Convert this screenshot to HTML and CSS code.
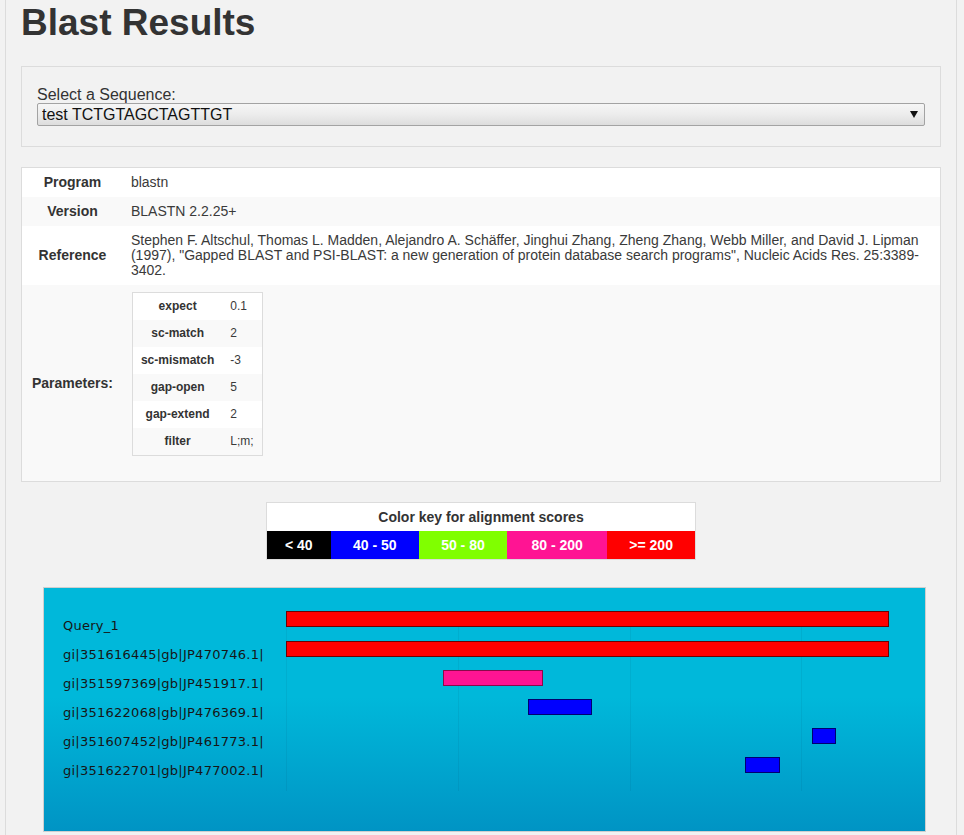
FILE: index.html
```html
<!DOCTYPE html>
<html>
<head>
<meta charset="utf-8">
<title>Blast Results</title>
<link rel="stylesheet" href="styles.css">
</head>
<body>
<div class="page">
  <h1 class="title">Blast Results</h1>

  <div class="panel select-panel">
    <label class="select-label" for="seq">Select a Sequence:</label>
    <div class="select-wrap">
      <select id="seq" class="seq-select">
        <option>test TCTGTAGCTAGTTGT</option>
      </select>
      <svg class="select-arrow" width="8" height="7" viewBox="0 0 8 7"><path d="M0 0H8L4 7Z" fill="#111"/></svg>
    </div>
  </div>

  <div class="info-box">
    <table class="info-table">
      <tr>
        <th>Program</th>
        <td>blastn</td>
      </tr>
      <tr class="stripe">
        <th>Version</th>
        <td>BLASTN 2.2.25+</td>
      </tr>
      <tr>
        <th>Reference</th>
        <td>Stephen F. Altschul, Thomas L. Madden, Alejandro A. Schäffer, Jinghui Zhang, Zheng Zhang, Webb Miller, and David J. Lipman (1997), "Gapped BLAST and PSI-BLAST: a new generation of protein database search programs", Nucleic Acids Res. 25:3389-3402.</td>
      </tr>
      <tr class="stripe">
        <th>Parameters:</th>
        <td>
          <table class="param-table">
            <tr><th>expect</th><td>0.1</td></tr>
            <tr class="stripe"><th>sc-match</th><td>2</td></tr>
            <tr><th>sc-mismatch</th><td>-3</td></tr>
            <tr class="stripe"><th>gap-open</th><td>5</td></tr>
            <tr><th>gap-extend</th><td>2</td></tr>
            <tr class="stripe"><th>filter</th><td>L;m;</td></tr>
          </table>
        </td>
      </tr>
    </table>
  </div>

  <table class="key-table">
    <colgroup>
      <col class="k1"><col class="k2"><col class="k3"><col class="k4"><col class="k5">
    </colgroup>
    <tr><th colspan="5">Color key for alignment scores</th></tr>
    <tr class="key-row">
      <td class="c-black">&lt; 40</td>
      <td class="c-blue">40 - 50</td>
      <td class="c-green">50 - 80</td>
      <td class="c-pink">80 - 200</td>
      <td class="c-red">&gt;= 200</td>
    </tr>
  </table>

  <div class="chart">
    <div class="chart-body">
      <div class="chart-labels">
        <div class="chart-label">Query_1</div>
        <div class="chart-label">gi|351616445|gb|JP470746.1|</div>
        <div class="chart-label">gi|351597369|gb|JP451917.1|</div>
        <div class="chart-label">gi|351622068|gb|JP476369.1|</div>
        <div class="chart-label">gi|351607452|gb|JP461773.1|</div>
        <div class="chart-label">gi|351622701|gb|JP477002.1|</div>
      </div>
      <svg class="chart-svg" width="624" height="180" viewBox="0 0 624 180">
        <g stroke="rgba(0,40,70,0.07)" stroke-width="1">
          <line x1="0.5" y1="0" x2="0.5" y2="180"/>
          <line x1="172.5" y1="0" x2="172.5" y2="180"/>
          <line x1="344.5" y1="0" x2="344.5" y2="180"/>
          <line x1="515.5" y1="0" x2="515.5" y2="180"/>
        </g>
        <rect x="0.5" y="0.5" width="602" height="15" fill="#ff0000" stroke="#6e0000"/>
        <rect x="0.5" y="30.5" width="602" height="15" fill="#ff0000" stroke="#6e0000"/>
        <rect x="157.5" y="59.5" width="99" height="15" fill="#ff1493" stroke="#8a0a4a"/>
        <rect x="242.5" y="88.5" width="63" height="15" fill="#0000ff" stroke="#00006e"/>
        <rect x="526.5" y="117.5" width="23" height="15" fill="#0000ff" stroke="#00006e"/>
        <rect x="459.5" y="146.5" width="34" height="15" fill="#0000ff" stroke="#00006e"/>
      </svg>
    </div>
  </div>
</div>
</body>
</html>
```

FILE: styles.css
```css
html, body {
  margin: 0;
  padding: 0;
  background: #f2f2f2;
}

body {
  font-family: "Liberation Sans", Arial, sans-serif;
  color: #333;
  font-size: 14px;
}

.page {
  margin-left: 5px;
  width: 920px;
  padding: 0 15px 30px 15px;
  border-left: 1px solid #dcdcdc;
  border-right: 1px solid #dcdcdc;
  min-height: 835px;
}

.title {
  margin: 0 0 23px 0;
  padding-top: 3px;
  font-size: 37px;
  line-height: 40px;
  font-weight: bold;
  color: #333;
}

.panel {
  border: 1px solid #dcdcdc;
  background: #f2f2f2;
}

.select-panel {
  padding: 20px 15px 20px 15px;
  margin-bottom: 20px;
}

.select-label {
  display: block;
  font-size: 16px;
  line-height: 16px;
  color: #333;
}

.select-wrap {
  position: relative;
}

.seq-select {
  display: block;
  width: 100%;
  height: 23px;
  margin: 0;
  padding: 0 20px 0 4px;
  font-family: "Liberation Sans", Arial, sans-serif;
  font-size: 16px;
  color: #111;
  border: 1px solid #a3a3a3;
  border-radius: 2px;
  background: linear-gradient(to bottom, #f6f6f6 0%, #ececec 50%, #dddddd 100%);
  -webkit-appearance: none;
  appearance: none;
  box-sizing: border-box;
}

.select-arrow {
  position: absolute;
  right: 7px;
  top: 8px;
  pointer-events: none;
}

.info-box {
  border: 1px solid #dcdcdc;
  background: #fff;
  margin-bottom: 20px;
}

.info-table {
  width: 100%;
  border-collapse: collapse;
  border-spacing: 0;
}

.info-table > tbody > tr > th,
.info-table > tbody > tr > td {
  padding: 7px 8px;
  line-height: 15px;
  font-size: 14px;
  vertical-align: middle;
}

.info-table > tbody > tr > th {
  width: 1%;
  padding-left: 10px;
  padding-right: 10px;
  white-space: nowrap;
  text-align: center;
  font-weight: bold;
  color: #333;
}

.info-table > tbody > tr > td {
  text-align: left;
  color: #3a3a3a;
}

.info-table > tbody > tr.stripe {
  background: #f9f9f9;
}

.param-table {
  border: 1px solid #dcdcdc;
  border-collapse: collapse;
  margin: 0 0 18px 1px;
  background: #fff;
}

.param-table th,
.param-table td {
  padding: 7px 8px;
  font-size: 12px;
  line-height: 13px;
  white-space: nowrap;
}

.param-table th {
  text-align: center;
  font-weight: bold;
  color: #333;
}

.param-table td {
  text-align: left;
  color: #3a3a3a;
}

.param-table tr.stripe {
  background: #f9f9f9;
}

.key-table {
  margin: 0 auto 27px auto;
  width: 430px;
  table-layout: fixed;
  border-collapse: collapse;
  border: 1px solid #dcdcdc;
  background: #fff;
}

.k1 { width: 64px; }
.k2 { width: 88px; }
.k3 { width: 88px; }
.k4 { width: 100px; }
.k5 { width: 88px; }

.key-table th {
  padding: 7px 0;
  line-height: 14px;
  font-size: 14px;
  font-weight: bold;
  text-align: center;
  color: #333;
}

.key-table td {
  padding: 7px 0 7px 0;
  line-height: 14px;
  font-size: 14px;
  font-weight: bold;
  text-align: center;
  color: #fff;
}

.c-black { background: #000; }
.c-blue { background: #0000ff; }
.c-green { background: #80ff00; }
.c-pink { background: #ff1493; }
.c-red { background: #ff0000; }

.chart {
  margin-left: 22px;
  border: 1px solid #cfcfcf;
  padding: 23px 0 40px 19px;
  box-sizing: content-box;
  width: 862px;
  background: linear-gradient(to bottom, #00b8da 0%, #00b8da 45%, #0094c4 100%);
}

.chart-body {
  display: flex;
  align-items: flex-start;
}

.chart-labels {
  width: 223px;
  flex: 0 0 223px;
}

.chart-label {
  font-family: "DejaVu Sans", Verdana, sans-serif;
  font-size: 13px;
  letter-spacing: 0.25px;
  line-height: 29px;
  height: 29px;
  color: #161616;
  white-space: nowrap;
}

.chart-svg {
  display: block;
}
```
